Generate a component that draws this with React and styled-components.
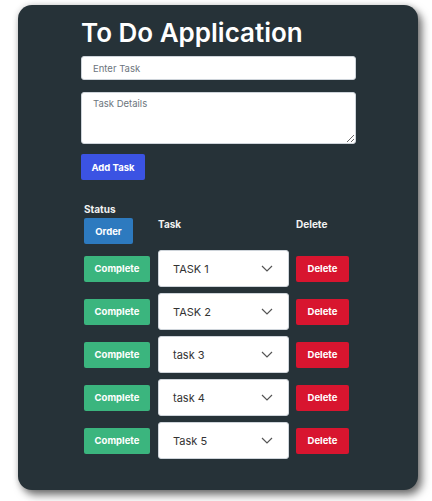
import React from 'react';
import styled, { createGlobalStyle } from 'styled-components';

const GlobalStyle = createGlobalStyle`
  body {
    margin: 0;
    background: #ffffff;
    font-family: Inter, "Noto Sans", sans-serif;
  }
`;

const Page = styled.div`
  padding: 5px 14px 11px 18px;
`;

const Card = styled.div`
  width: 400px;
  height: 485px;
  box-sizing: border-box;
  background-color: #263238;
  border-radius: 14px;
  box-shadow: 4px 5px 8px rgba(0, 0, 0, 0.55), 0 0 6px rgba(0, 0, 0, 0.15);
  padding: 12px 0 0 63px;
`;

const Title = styled.h1`
  margin: 0 0 7px;
  color: #fff;
  font-size: 26px;
  font-weight: 600;
  line-height: 32px;
`;

const Form = styled.div`
  display: flex;
  flex-direction: column;
  align-items: flex-start;
  gap: 12px;
  & > button { margin-top: -2px; }
`;

const fieldStyle = `
  width: 275px;
  box-sizing: border-box;
  border: 1px solid #ced4da;
  border-radius: 3px;
  background: #fff;
  font-family: Inter, "Noto Sans", sans-serif;
  font-size: 9.5px;
  color: #333;
  padding: 0 11px;
  &::placeholder { color: #6c757d; }
`;

const TextInput = styled.input`
  ${fieldStyle}
  height: 24px;
`;

const TextArea = styled.textarea`
  ${fieldStyle}
  height: 52px;
  padding-top: 5px;
  resize: vertical;
  display: block;
`;

const Button = styled.button`
  height: ${(p) => p.$h || 26}px;
  width: ${(p) => p.$w}px;
  border: none;
  border-radius: 2px;
  background-color: ${(p) => p.$bg};
  color: #fff;
  font-family: Inter, "Noto Sans", sans-serif;
  font-size: 9.5px;
  font-weight: 700;
  padding: 0;
  cursor: pointer;
`;

const Table = styled.div`
  margin-top: 23px;
  padding-left: 3px;
  display: flex;
  flex-direction: column;
  gap: 6px;
`;

const Row = styled.div`
  display: grid;
  grid-template-columns: 66px 131px 52px;
  column-gap: 8px;
  align-items: center;
  & > :nth-child(3) { margin-left: -1px; }
`;

const HeadCell = styled.div`
  color: #f2f2f2;
  font-size: 10px;
  font-weight: 700;
  display: flex;
  flex-direction: column;
  gap: 3px;
  align-items: flex-start;
`;

const SelectBox = styled.div`
  height: 37px;
  box-sizing: border-box;
  background: #fff;
  border: 1px solid #ced4da;
  border-radius: 3px;
  display: flex;
  align-items: center;
  justify-content: space-between;
  padding: 0 15px 0 14px;
  color: #333;
  font-size: 11px;
`;

const Chevron = () => (
  <svg width="12" height="7" viewBox="0 0 12 7" fill="none">
    <path d="M1 1l5 5 5-5" stroke="#555" strokeWidth="1.2" />
  </svg>
);

const tasks = ['TASK 1', 'TASK 2', 'task 3', 'task 4', 'Task 5'];

export default function App() {
  return (
    <Page>
      <GlobalStyle />
      <Card>
        <Title>To Do Application</Title>
        <Form>
          <TextInput placeholder="Enter Task" />
          <TextArea placeholder="Task Details" />
          <Button $bg="#3b53e3" $w={64}>Add Task</Button>
        </Form>
        <Table>
          <Row>
            <HeadCell>
              Status
              <Button $bg="#2d7abf" $w={49}>Order</Button>
            </HeadCell>
            <HeadCell>Task</HeadCell>
            <HeadCell>Delete</HeadCell>
          </Row>
          {tasks.map((t) => (
            <Row key={t}>
              <Button $bg="#3bb57e" $w={66}>Complete</Button>
              <SelectBox>
                {t}
                <Chevron />
              </SelectBox>
              <Button $bg="#d8152f" $w={53}>Delete</Button>
            </Row>
          ))}
        </Table>
      </Card>
    </Page>
  );
}
